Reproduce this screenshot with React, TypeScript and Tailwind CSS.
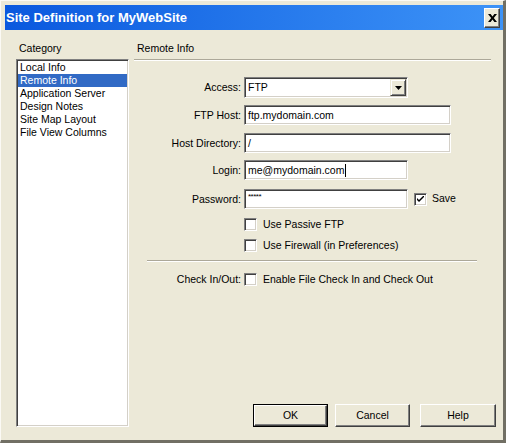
import React from 'react'

const font = { fontFamily: '"Liberation Sans", Arial, sans-serif' }

const sunken =
  'border border-t-[#808080] border-l-[#808080] border-b-[#ffffff] border-r-[#ffffff] shadow-[inset_1px_1px_0_#404040,inset_-1px_-1px_0_#d4d0c8]'

function TextField({ value, width, caret, small }: { value: string; width: string; caret?: boolean; small?: boolean }) {
  return (
    <div className={`${width} h-[20px] bg-white ${sunken} flex items-center pl-[3px]`}>
      {small ? (
        <span className="text-[8px] leading-none -mt-[5px] tracking-[-0.5px]">*****</span>
      ) : (
        <span className="text-[10.5px] leading-none">{value}</span>
      )}
      {caret && <span className="ml-px w-px h-[13px] bg-black" />}
    </div>
  )
}

function Check({ checked }: { checked?: boolean }) {
  return (
    <div className={`w-[13px] h-[13px] shrink-0 bg-white ${sunken} flex items-center justify-center`}>
      {checked && (
        <svg width="7" height="7" viewBox="0 0 7 7">
          <path d="M0 2 L0 4 L2 6 L7 1 L7 -1 L2 4 Z" fill="#000" />
        </svg>
      )}
    </div>
  )
}

function Button({ label, primary }: { label: string; primary?: boolean }) {
  return (
    <div className={`h-[23px] flex items-center justify-center text-[10.5px] bg-[#ece9d8] ${primary ? 'border border-black' : ''}`}>
      <div className="w-full h-full flex items-center justify-center border border-t-white border-l-white border-b-[#404040] border-r-[#404040] shadow-[inset_-1px_-1px_0_#808080]">
        {label}
      </div>
    </div>
  )
}

function Row({ label, children }: { label: string; children: React.ReactNode }) {
  return (
    <div className="flex items-center gap-[3px]">
      <div className="w-[107px] text-right text-[10.5px] leading-[13px]">{label}</div>
      {children}
    </div>
  )
}

export default function App() {
  const items = ['Local Info', 'Remote Info', 'Application Server', 'Design Notes', 'Site Map Layout', 'File View Columns']
  return (
    <div style={font} className="w-[506px] h-[443px] bg-[#ece9d8] text-black flex flex-col border-t border-l border-[#fbfaf5] border-r-[3px] border-b-[3px] border-r-[#716f64] border-b-[#716f64] pt-[4px] pl-[4px]">
      {/* title bar */}
      <div className="h-[25px] shrink-0 bg-gradient-to-r from-[#0a58de] to-[#3d93f7] flex items-center justify-between pl-[1px] pr-[3px]">
        <span className="text-white font-bold text-[13px]">Site Definition for MyWebSite</span>
        <div className="w-[16px] h-[20px] bg-[#ece9d8] border border-t-white border-l-white border-b-[#404040] border-r-[#404040] shadow-[inset_-1px_-1px_0_#808080] flex items-center justify-center">
          <svg width="9" height="8" viewBox="0 0 9 8">
            <path d="M0 0h2.6L4.5 2.5 6.4 0H9L5.8 4 9 8H6.4L4.5 5.5 2.6 8H0l3.2-4z" fill="#000" />
          </svg>
        </div>
      </div>

      {/* body */}
      <div className="flex-1 flex pl-[11px] pr-[8px] pt-[12px] pb-[13px]">
        {/* category */}
        <div className="w-[113px] flex flex-col">
          <div className="text-[10.5px] leading-[13px] pl-[3px]">Category</div>
          <div className={`mt-[4px] flex-1 bg-white ${sunken} pt-[1px] px-px`}>
            {items.map((it) => (
              <div
                key={it}
                className={`h-[13px] leading-[13px] text-[10.5px] pl-[2px] ${it === 'Remote Info' ? 'bg-[#316ac5] text-white' : ''}`}
              >
                {it}
              </div>
            ))}
          </div>
        </div>

        {/* right pane */}
        <div className="flex-1 ml-[5px] flex flex-col">
          <div className="text-[10.5px] leading-[13px] pl-[3px]">Remote Info</div>
          <div className="mt-[4px] mr-[4px] h-[2px] border-t border-t-[#aca899] border-b border-b-white" />

          <div className="mt-[16px] flex flex-col">
            <Row label="Access:">
              <div className={`w-[164px] h-[21px] bg-white ${sunken} flex items-center justify-between pl-[3px] pr-[1px]`}>
                <span className="text-[10.5px]">FTP</span>
                <div className="w-[16px] h-[17px] bg-[#ece9d8] border border-t-[#ece9d8] border-l-[#ece9d8] border-b-[#404040] border-r-[#404040] shadow-[inset_1px_1px_0_#ffffff,inset_-1px_-1px_0_#808080] flex items-center justify-center">
                  <svg width="7" height="4" viewBox="0 0 7 4">
                    <path d="M0 0h7L3.5 4z" fill="#000" />
                  </svg>
                </div>
              </div>
            </Row>
            <div className="mt-[7px]">
              <Row label="FTP Host:">
                <TextField value="ftp.mydomain.com" width="w-[207px]" />
              </Row>
            </div>
            <div className="mt-[8px]">
              <Row label="Host Directory:">
                <TextField value="/" width="w-[207px]" />
              </Row>
            </div>
            <div className="mt-[7px]">
              <Row label="Login:">
                <TextField value="me@mydomain.com" width="w-[164px]" caret />
              </Row>
            </div>
            <div className="mt-[9px]">
              <Row label="Password:">
                <TextField value="*****" width="w-[164px]" small />
                <div className="ml-[3px] flex items-center gap-[5px]">
                  <Check checked />
                  <span className="text-[10.5px]">Save</span>
                </div>
              </Row>
            </div>

            <div className="mt-[9px] ml-[110px] flex items-center gap-[6px]">
              <Check />
              <span className="text-[10.5px] leading-[13px]">Use Passive FTP</span>
            </div>
            <div className="mt-[8px] ml-[110px] flex items-center gap-[6px]">
              <Check />
              <span className="text-[10.5px] leading-[13px]">Use Firewall (in Preferences)</span>
            </div>

            <div className="mt-[8px] ml-[13px] w-[330px] h-[2px] border-t border-t-[#aca899] border-b border-b-white" />

            <div className="mt-[11px]">
              <Row label="Check In/Out:">
                <div className="flex items-center gap-[6px]">
                  <Check />
                  <span className="text-[10.5px] leading-[13px]">Enable File Check In and Check Out</span>
                </div>
              </Row>
            </div>
          </div>

          <div className="mt-auto flex justify-end gap-[7px] -mr-[1px]">
            <div className="w-[75px]">
              <Button label="OK" primary />
            </div>
            <div className="w-[75px]">
              <Button label="Cancel" />
            </div>
            <div className="w-[76px] ml-[3px]">
              <Button label="Help" />
            </div>
          </div>
        </div>
      </div>
    </div>
  )
}
